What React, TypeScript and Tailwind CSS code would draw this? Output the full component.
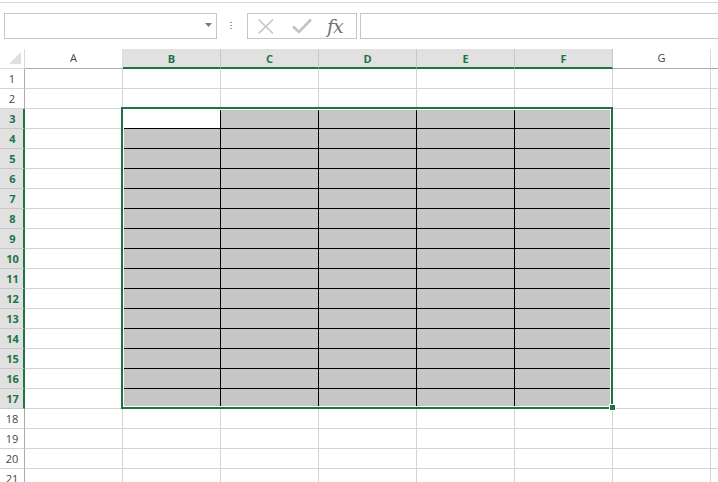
import React from "react";

const COLS = ["A", "B", "C", "D", "E", "F", "G", ""];
const SEL_COLS = ["B", "C", "D", "E", "F"];
const ROWS = Array.from({ length: 21 }, (_, i) => i + 1);

const isSelRow = (r: number) => r >= 3 && r <= 17;

function Toolbar() {
  return (
    <div className="relative h-[49px] w-full shrink-0 bg-white">
      <div className="absolute left-0 right-0 top-[2px] h-px bg-[#d6d6d6]" />
      <div className="absolute left-[4px] top-[13px] h-[26px] w-[213px] border border-[#c6c6c6] bg-white">
        <svg className="absolute left-[200px] top-[9px]" width="8" height="5" viewBox="0 0 8 5">
          <path d="M0 0 H7 L3.5 4 Z" fill="#7a7a7a" />
        </svg>
      </div>
      <div className="absolute left-[230px] top-[22px] flex flex-col gap-[2px]">
        <span className="h-px w-[2px] bg-[#a0a0a0]" />
        <span className="h-px w-[2px] bg-[#a0a0a0]" />
        <span className="h-px w-[2px] bg-[#a0a0a0]" />
      </div>
      <div className="absolute left-[247px] top-[13px] flex h-[26px] w-[110px] items-center border border-[#c6c6c6] bg-white">
        <svg className="ml-[9px]" width="18" height="17" viewBox="0 0 18 17">
          <path d="M1.5 1.5 L16 15.5 M16 1.5 L1.5 15.5" stroke="#c4c4c4" strokeWidth="1.6" />
        </svg>
        <svg className="ml-[17px]" width="20" height="16" viewBox="0 0 20 16">
          <path d="M1 8.5 L7 14 L19 1.5" stroke="#c4c4c4" strokeWidth="2.6" fill="none" />
        </svg>
        <span className="ml-[15px] font-['DejaVu_Serif',serif] text-[19px] italic leading-none tracking-[-1px] text-[#737373]">
          fx
        </span>
      </div>
      <div className="absolute left-[360px] right-[-4px] top-[13px] h-[26px] border border-[#c6c6c6] bg-white" />
    </div>
  );
}

function HeaderRow() {
  return (
    <div className="flex h-[20px]">
      <div className="relative h-[20px] w-[25px] shrink-0 border-b border-r border-[#dadada]">
        <svg className="absolute left-[9px] top-[3px]" width="13" height="13" viewBox="0 0 13 13">
          <path d="M12 0 V12 H0 Z" fill="#dfdfdf" />
        </svg>
      </div>
      {COLS.map((c, i) => {
        const sel = SEL_COLS.includes(c);
        return (
          <div
            key={i}
            className={
              sel
                ? "flex h-[20px] w-[98px] shrink-0 items-center justify-center border-b-2 border-r border-b-[#217346] border-r-[#c8c8c8] bg-[#e1e1e1] pt-[2px] text-[11px] font-bold text-[#217346]"
                : "flex h-[20px] w-[98px] shrink-0 items-center justify-center border-b border-r border-b-[#ababab] border-r-[#dadada] bg-white text-[11px] text-[#444444]"
            }
          >
            {c}
          </div>
        );
      })}
    </div>
  );
}

function Cell({ r, c }: { r: number; c: string }) {
  const inRange = isSelRow(r) && SEL_COLS.includes(c);
  const active = r === 3 && c === "B";
  const bg = inRange && !active ? "bg-[#c6c6c6]" : "bg-white";
  const border = inRange ? "border-black" : "border-[#d4d4d4]";
  return <div className={`h-[20px] w-[98px] shrink-0 border-b border-r ${border} ${bg}`} />;
}

function GridRow({ r }: { r: number }) {
  const sel = isSelRow(r);
  return (
    <div className="flex h-[20px]">
      <div
        className={
          sel
            ? "flex h-[20px] w-[25px] shrink-0 items-center justify-center border-b border-r-2 border-b-[#c8c8c8] border-r-[#217346] bg-[#e1e1e1] pl-[2px] pt-[2px] text-[11px] font-bold text-[#217346]"
            : "flex h-[20px] w-[25px] shrink-0 items-center justify-center border-b border-r border-b-[#d4d4d4] border-r-[#ababab] bg-white pt-[2px] text-[11px] text-[#444444]"
        }
      >
        {r}
      </div>
      {COLS.map((c, i) => (
        <Cell key={i} r={r} c={c} />
      ))}
    </div>
  );
}

export default function App() {
  return (
    <div className="flex h-[482px] w-[718px] flex-col overflow-hidden bg-white font-['Open_Sans',sans-serif]">
      <Toolbar />
      <div className="relative flex flex-col">
        <HeaderRow />
        {ROWS.map((r) => (
          <GridRow key={r} r={r} />
        ))}
        {/* selection range B3:F17 */}
        <div className="absolute left-[121px] top-[58px] h-[302px] w-[492px] border-2 border-[#217346]">
          <div className="absolute inset-0 border border-white" />
        </div>
        <div className="absolute left-[609px] top-[355px] h-[7px] w-[7px] border border-white bg-[#217346]" />
      </div>
    </div>
  );
}
